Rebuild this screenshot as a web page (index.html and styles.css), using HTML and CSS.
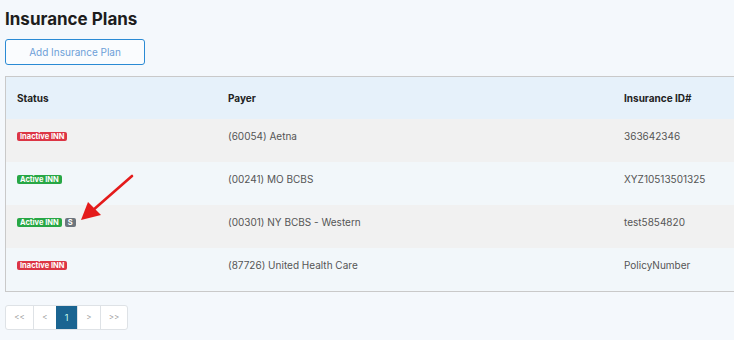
FILE: index.html
```html
<!DOCTYPE html>
<html>
<head>
<meta charset="utf-8">
<link rel="stylesheet" href="styles.css">
</head>
<body>
<div class="page">
  <h1 class="title">Insurance Plans</h1>
  <button class="add-btn">Add Insurance Plan</button>
  <div class="table-wrap">
    <table class="plans">
      <thead>
        <tr><th class="c-status">Status</th><th class="c-payer">Payer</th><th class="c-id">Insurance ID#</th></tr>
      </thead>
      <tbody>
        <tr class="odd"><td><span class="badge red">Inactive INN</span></td><td>(60054) Aetna</td><td>363642346</td></tr>
        <tr class="even"><td><span class="badge green">Active INN</span></td><td>(00241) MO BCBS</td><td>XYZ10513501325</td></tr>
        <tr class="odd"><td><span class="badge green">Active INN</span><span class="badge gray">S</span></td><td>(00301) NY BCBS - Western</td><td>test5854820</td></tr>
        <tr class="even"><td><span class="badge red">Inactive INN</span></td><td>(87726) United Health Care</td><td>PolicyNumber</td></tr>
      </tbody>
    </table>
    <svg class="arrow" width="60" height="56" viewBox="0 0 60 56">
      <line x1="54" y1="2" x2="14" y2="37" stroke="#e41b1b" stroke-width="2.6" stroke-linecap="round"/>
      <polygon points="3,46 10,28 23,41" fill="#e41b1b"/>
    </svg>
  </div>
  <div class="pager">
    <span class="pg w-first">&lt;&lt;</span><span class="pg w-prev">&lt;</span><span class="pg active">1</span><span class="pg w-prev">&gt;</span><span class="pg w-last">&gt;&gt;</span>
  </div>
</div>
</body>
</html>
```
FILE: styles.css
```css
html, body { margin: 0; padding: 0; overflow: hidden; }
body {
  background: #f4f8fc;
  font-family: "Inter", "DejaVu Sans", sans-serif;
  color: #333;
}
.page { padding: 5px 0 0 5px; width: 740px; }
.title {
  margin: 3px 0 0 0;
  font-size: 17px;
  line-height: 22px;
  font-weight: 700;
  color: #1d1d1d;
}
.add-btn {
  margin-top: 9px;
  display: block;
  width: 140px;
  height: 26px;
  background: #fafcfe;
  border: 1px solid #2a8ad4;
  border-radius: 3px;
  color: #6d9fd8;
  font-family: inherit;
  font-size: 10px;
  padding: 0;
}
.table-wrap { position: relative; margin-top: 11px; }
.plans {
  border-collapse: collapse;
  width: 740px;
  border: 1px solid #c9c9c9;
  font-size: 10px;
}
.plans th {
  background: #e6f1fa;
  height: 42px;
  text-align: left;
  font-weight: 700;
  color: #222;
  padding: 0 0 0 11px;
  vertical-align: middle;
}
.c-status { width: 200px; }
.c-payer { width: 384px; }
.c-id { padding-left: 12px !important; }
.plans td {
  height: 43px;
  box-sizing: border-box;
  padding: 11px 0 0 11px;
  vertical-align: top;
  color: #555;
  line-height: 13px;
}
.plans td:nth-child(3) { padding-left: 12px; }
.plans tr.odd td { background: #f1f1f1; }
.plans tr.even td { background: #f2f7fa; }
.badge {
  display: inline-block;
  font-size: 7.5px;
  font-weight: 700;
  color: #fff;
  line-height: 9px;
  padding: 0 3px;
  border-radius: 2px;
  vertical-align: 1px;
}
.badge.red { background: #dc3545; }
.badge.green { background: #28a745; }
.badge.gray { background: #6c757d; padding: 0 3px; margin-left: 3px; }
.arrow { position: absolute; left: 73px; top: 98px; }
.pager {
  margin-top: 13px;
  display: flex;
  width: max-content;
  border: 1px solid #dee2e6;
  border-radius: 3px;
  background: #fff;
  overflow: hidden;
}
.pg {
  height: 23px;
  line-height: 23px;
  font-size: 8px;
  color: #999;
  text-align: center;
  border-left: 1px solid #dee2e6;
  box-sizing: border-box;
}
.pg:first-child { border-left: none; }
.w-first { width: 27px; }
.w-prev { width: 23px; }
.w-last { width: 27px; }
.pg.active { width: 21px; background: #1a6491; color: #cfe; font-size: 9px; border-left: none; }
```
